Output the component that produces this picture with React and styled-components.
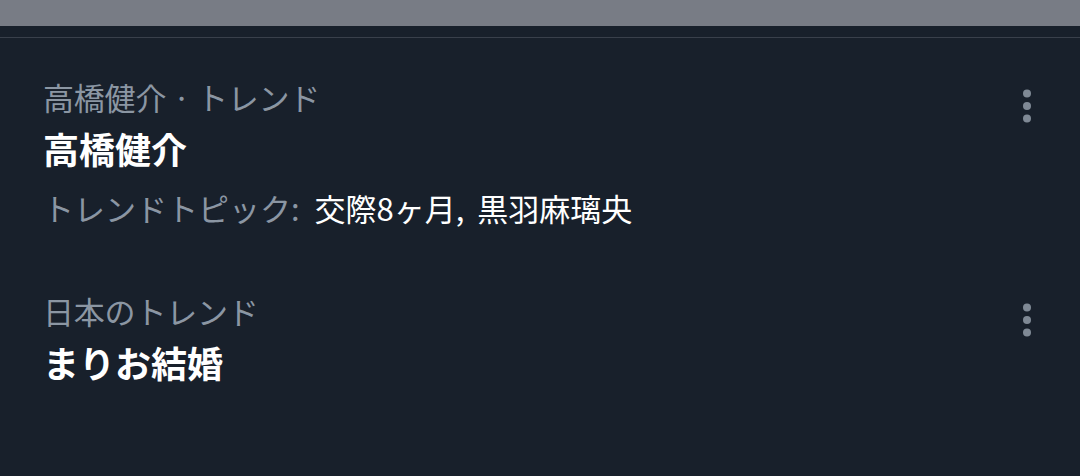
import styled, { createGlobalStyle } from 'styled-components';

const GlobalStyle = createGlobalStyle`
  html, body {
    margin: 0;
    padding: 0;
    background: #18202b;
  }
  body {
    font-family: "Noto Sans CJK JP", "Noto Sans", sans-serif;
    -webkit-font-smoothing: antialiased;
  }
`;

const trends = [
  {
    id: 1,
    context: '高橋健介 · トレンド',
    name: '高橋健介',
    topics: '交際8ヶ月, 黒羽麻璃央',
  },
  {
    id: 2,
    context: '日本のトレンド',
    name: 'まりお結婚',
  },
];

const MoreIcon = () => (
  <svg width="10" height="34" viewBox="0 0 10 34" fill="currentColor">
    <circle cx="5" cy="4.5" r="4" />
    <circle cx="5" cy="17" r="4" />
    <circle cx="5" cy="29.5" r="4" />
  </svg>
);

const App = () => (
  <Page>
    <GlobalStyle />
    <Overlay />
    <Divider />
    <List>
      {trends.map((trend) => (
        <Trend key={trend.id}>
          <Body>
            <Context>{trend.context}</Context>
            <Name>{trend.name}</Name>
            {trend.topics && (
              <Topics>
                <span>トレンドトピック: </span>
                <strong>{trend.topics}</strong>
              </Topics>
            )}
          </Body>
          <More aria-label="more">
            <MoreIcon />
          </More>
        </Trend>
      ))}
    </List>
  </Page>
);

const Page = styled.div`
  width: 1080px;
  height: 476px;
  overflow: hidden;
  background: #18202b;
`;

const Overlay = styled.div`
  height: 26px;
  background: #787c85;
`;

const Divider = styled.div`
  height: 1px;
  margin-top: 11px;
  background: #39404b;
`;

const List = styled.div`
  display: flex;
  flex-direction: column;
  gap: 61px;
  padding-top: 38px;
`;

const Trend = styled.div`
  display: flex;
  justify-content: space-between;
  align-items: flex-start;
  padding: 0 48px 0 43px;
`;

const Body = styled.div`
  display: flex;
  flex-direction: column;
`;

const Context = styled.div`
  color: #8b96a3;
  font-size: 31px;
  line-height: 42px;
  letter-spacing: -0.2px;
`;

const Name = styled.div`
  margin-top: 4px;
  color: #ffffff;
  font-size: 36px;
  font-weight: 700;
  line-height: 52px;
`;

const Topics = styled.div`
  margin-top: 13px;
  font-size: 31px;
  line-height: 42px;
  color: #8b96a3;
  word-spacing: 6px;
  span {
    margin-right: 2px;
  }
  strong {
    color: #ffffff;
    font-weight: 400;
  }
`;

const More = styled.button`
  margin-top: 13px;
  padding: 0;
  border: 0;
  background: none;
  color: #7f8995;
  display: flex;
`;

export default App;
